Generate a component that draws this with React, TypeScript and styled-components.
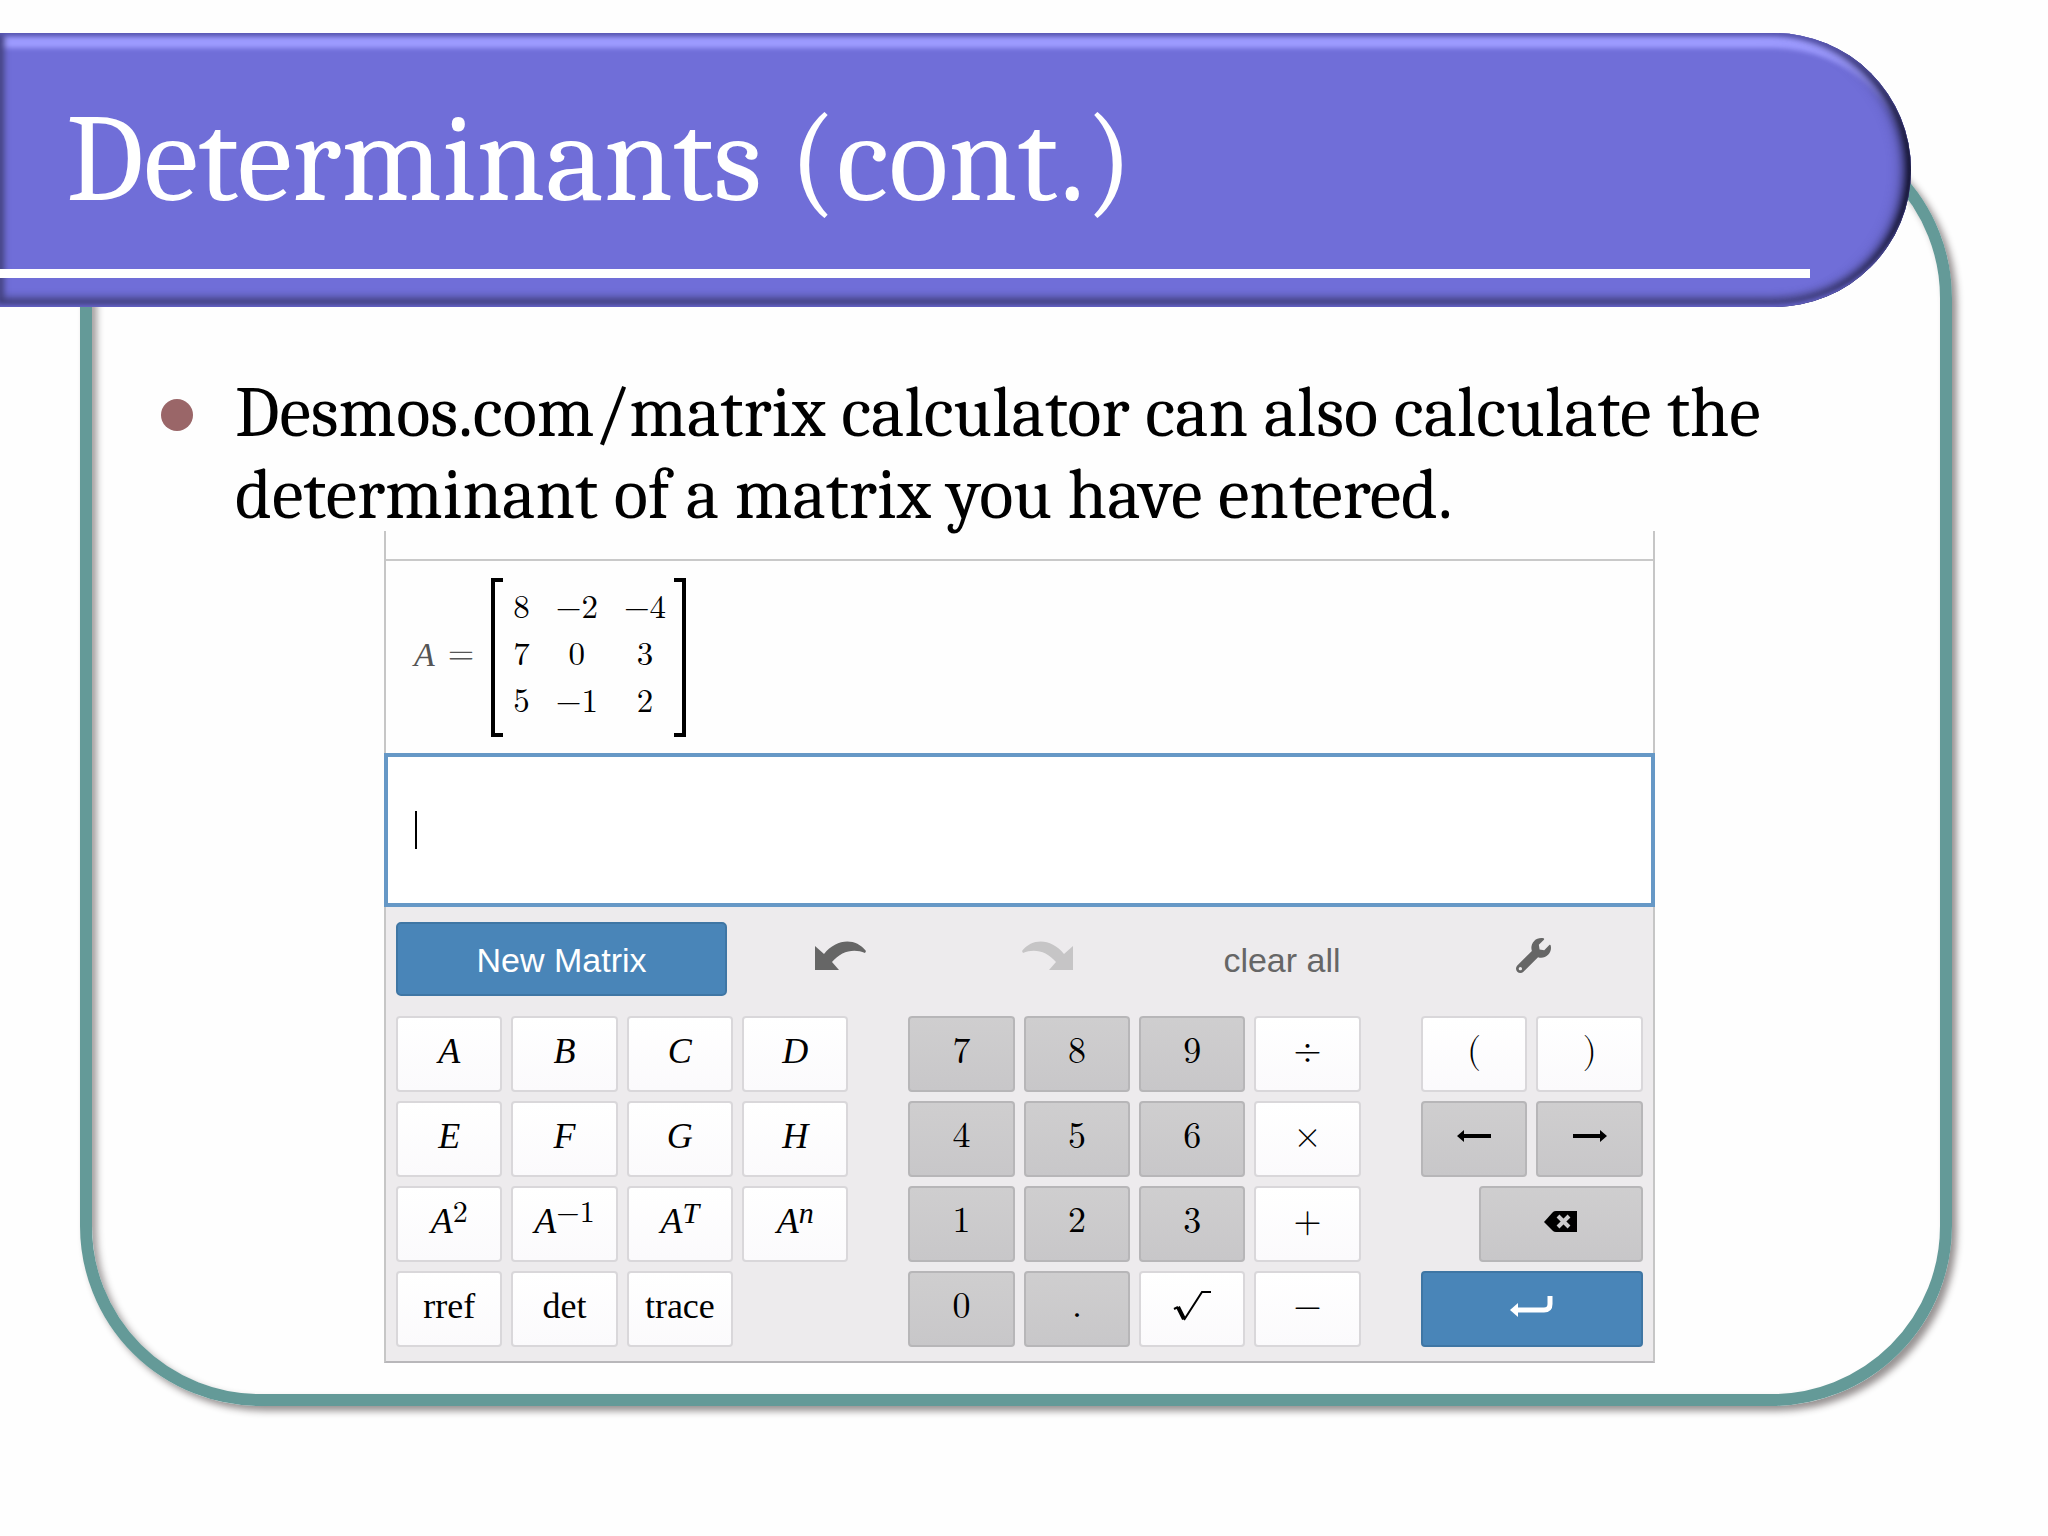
import React from "react";
import styled, { createGlobalStyle, css } from "styled-components";
import { FaWrench } from "react-icons/fa";

const slideFont = `Cambria, Caladea, "Liberation Serif", serif`;
const mathFont = `"Latin Modern Math", "Liberation Serif", serif`;
const textFont = `"Liberation Serif", serif`;
const uiFont = `"Liberation Sans", Arial, sans-serif`;

const GlobalStyle = createGlobalStyle`
  *, *::before, *::after { box-sizing: border-box; }
  body { margin: 0; background: #fefefe; }
  h1, p, ul { margin: 0; padding: 0; }
  button, input { font: inherit; margin: 0; }
`;

const Slide = styled.main`
  padding: 33px 0 129px;
  font-family: ${slideFont};
  color: #000;
`;

const Banner = styled.header`
  position: relative;
  z-index: 1;
  margin-right: 137px;
  padding: 59px 101px 29px 0;
  border-radius: 0 137px 137px 0;
  background: #706ed8;
  box-shadow:
    inset 0 6px 5px -3px #5856b4,
    inset 0 -6px 4px -3px #6664c8,
    inset -9px 0 8px -5px #0a0a1c,
    inset -14px 0 14px -6px #3c3b78,
    inset 8px 0 6px -4px #43427e,
    inset 0 -14px 8px -5px #3f3e78,
    inset 0 18px 5px -3px #9e9cff;
`;

const Title = styled.h1`
  padding-left: 66px;
  font-size: 124px;
  font-weight: 400;
  line-height: 136px;
  padding-bottom: 41px;
  border-bottom: 9px solid #fff;
  color: #fff;
`;

const Frame = styled.section`
  margin: -189px 96px 0 80px;
  padding: 242px 285px 31px 292px;
  border: 12px solid #649a98;
  border-radius: 180px;
  box-shadow:
    5px 5px 7px rgba(40, 30, 30, 0.48),
    inset 5px 5px 7px rgba(40, 30, 30, 0.42);
`;

const Points = styled.ul`
  margin: 0 -150px -5px -223px;
  list-style: none;
`;

const Point = styled.li`
  display: grid;
  grid-template-columns: 32px 1fr;
  gap: 42px;
  font-size: 71px;
  line-height: 82px;

  &::before {
    content: "";
    height: 32px;
    margin-top: 27px;
    border-radius: 50%;
    background: #9a6668;
  }
`;

const Calculator = styled.section`
  border: 2px solid #c6c6c6;
  border-top: 0;
  border-bottom-color: #b8b7ba;
`;

const Expression = styled.div`
  display: flex;
  align-items: center;
  height: 194px;
  margin-top: -2px;
  padding: 0 28px;
  border-top: 2px solid #c9c9c9;
`;

const HistoryTail = styled.div`
  height: 30px;
`;

const Assign = styled.span`
  display: flex;
  gap: 13px;
  margin-right: 17px;
  padding-bottom: 6px;
  font: 34px/41px ${mathFont};
  color: #555;
`;

const Variable = styled.i`
  font-family: ${textFont};
  font-style: italic;
`;

const Matrix = styled.table`
  position: relative;
  border-collapse: collapse;
  font: 33px/41px ${mathFont};

  &::before,
  &::after {
    content: "";
    position: absolute;
    top: -9px;
    bottom: -9px;
    width: 12px;
    border: 4px solid #000;
  }
  &::before { left: 0; border-right: 0; }
  &::after { right: 0; border-left: 0; }
`;

const Cell = styled.td`
  padding: 0 13px 6px;
  text-align: center;

  &:first-child { padding-left: 22px; }
  &:last-child { padding-right: 20px; }
`;

const Entry = styled.label`
  display: flex;
  align-items: center;
  height: 154px;
  margin: 0 -2px;
  padding: 0 27px;
  border: 4px solid #6698c6;
  background: #fff;
`;

const Caret = styled.span`
  width: 2px;
  height: 38px;
  background: #000;
`;

const EntryInput = styled.input`
  flex: 1;
  min-width: 0;
  border: 0;
  outline: 0;
  padding: 0;
  background: transparent;
  font: 34px/48px ${mathFont};
`;

const Keypad = styled.div`
  display: grid;
  gap: 20px;
  padding: 15px 10px 14px;
  background: #edebed;
`;

const Toolbar = styled.div`
  display: grid;
  grid-template-columns: 331fr 226fr 188fr 282fr 220fr;
  height: 74px;
`;

const ToolButton = styled.button<{ $look?: "primary" | "label" }>`
  display: flex;
  align-items: center;
  justify-content: center;
  padding: ${(p) => (p.$look ? "2px 0 0" : "0 0 7px")};
  border: 0;
  border-radius: 5px;
  background: none;
  color: #666;
  font: 34px/40px ${uiFont};

  ${(p) => p.$look === "primary" && css`
    border: 2px solid #3f76a4;
    background: #4985b8;
    color: #fff;
  `}
`;

const Blocks = styled.div`
  display: grid;
  grid-template-columns: 452fr 452fr 222fr;
  gap: 60px;
`;

const Block = styled.div<{ $columns: number }>`
  display: grid;
  grid-template-columns: repeat(${(p) => p.$columns}, 1fr);
  grid-auto-rows: 76px;
  gap: 9px;
`;

type Tone = "light" | "dark" | "blue";

const tones = {
  light: css`border-color: #d9d7da; background: linear-gradient(#fff, #fbfafc); color: #000;`,
  dark: css`border-color: #b7b6b8; background: linear-gradient(#cfcecf, #c8c7c9); color: #000;`,
  blue: css`border-color: #3f76a4; background: #4985b8; color: #fff;`,
};

const Key = styled.button<{ $tone: Tone; $face?: "math" | "italic" | "text"; $span?: number }>`
  display: flex;
  align-items: center;
  justify-content: center;
  grid-column: auto / span ${(p) => p.$span ?? 1};
  padding: 0 0 6px;
  border: 2px solid;
  border-radius: 4px;
  font: ${(p) => (p.$face === "italic" ? "italic " : "")}36px/40px
    ${(p) => (p.$face === "italic" || p.$face === "text" ? textFont : mathFont)};
  ${(p) => tones[p.$tone]}
`;

const BackspaceKey = styled(Key)`
  grid-column: 2 / span 3;
`;

const Power = styled.sup<{ $upright?: boolean }>`
  align-self: flex-start;
  margin-top: 9px;
  font-size: 30px;
  line-height: 32px;
  ${(p) => p.$upright && css`font-family: ${mathFont}; font-style: normal;`}
`;

const Icon = styled.svg`
  display: block;
  overflow: visible;
`;

const UndoArrow = ({ flip }: { flip?: boolean }) => (
  <Icon width="51" height="28" viewBox="0 0 51 28" fill={flip ? "#c6c5c6" : "#666"}>
    <path
      transform={flip ? "translate(51 0) scale(-1 1)" : undefined}
      d="M0 4 L9 12 C21 -3 40 -5 51 9 L50 11 C39 6 26 9 17 20 L24 28 H0Z"
    />
  </Icon>
);

const MoveArrow = ({ right }: { right?: boolean }) => (
  <Icon width="34" height="12" viewBox="0 0 34 12">
    <path
      transform={right ? "translate(34 0) scale(-1 1)" : undefined}
      d="M0 6 L7 0 V4 H34 V8 H7 V12Z"
    />
  </Icon>
);

const EraseIcon = () => (
  <Icon width="33" height="21" viewBox="0 0 33 21">
    <path d="M0 11 L9 1 Q10 0 12 0 H33 V21 H12 Q10 21 9 20Z" />
    <path d="M14 5 L25 16 M25 5 L14 16" stroke="#cccbcd" strokeWidth="4" />
  </Icon>
);

const EnterIcon = () => (
  <Icon width="43" height="20" viewBox="0 0 43 20">
    <path d="M6 14 H34 Q40 14 40 8 V0" fill="none" stroke="#fff" strokeWidth="5" />
    <path d="M0 14 L8 7 V21Z" fill="#fff" />
  </Icon>
);

const RootIcon = () => (
  <Icon width="37" height="30" viewBox="0 0 37 30" fill="none" stroke="#000">
    <path d="M0 18 L4 16" strokeWidth="2" />
    <path d="M4 16 L10 28" strokeWidth="4" />
    <path d="M10 29 L28 1 H37" strokeWidth="2" />
  </Icon>
);

const matrixRows = [
  ["8", "−2", "−4"],
  ["7", "0", "3"],
  ["5", "−1", "2"],
];
const letters = ["A", "B", "C", "D", "E", "F", "G", "H"];
const powers = [
  { exponent: "2", upright: true },
  { exponent: "−1", upright: true },
  { exponent: "T" },
  { exponent: "n" },
];
const functions = ["rref", "det", "trace"];
const numberKeys = ["7", "8", "9", "÷", "4", "5", "6", "×", "1", "2", "3", "+", "0", ".", "√", "−"];

export default function App() {
  return (
    <>
      <GlobalStyle />
      <Slide>
        <Banner>
          <Title>Determinants (cont.)</Title>
        </Banner>
        <Frame>
          <Points>
            <Point>
              <p>Desmos.com/matrix calculator can also calculate the determinant of a matrix you have entered.</p>
            </Point>
          </Points>
          <Calculator>
            <HistoryTail />
            <Expression>
              <Assign>
                <Variable>A</Variable>
                <span>=</span>
              </Assign>
              <Matrix>
                <tbody>
                  {matrixRows.map((row) => (
                    <tr key={row.join()}>
                      {row.map((value) => <Cell key={value}>{value}</Cell>)}
                    </tr>
                  ))}
                </tbody>
              </Matrix>
            </Expression>
            <Entry>
              <Caret />
              <EntryInput aria-label="Expression" />
            </Entry>
            <Keypad>
              <Toolbar>
                <ToolButton $look="primary">New Matrix</ToolButton>
                <ToolButton aria-label="Undo"><UndoArrow /></ToolButton>
                <ToolButton aria-label="Redo"><UndoArrow flip /></ToolButton>
                <ToolButton $look="label">clear all</ToolButton>
                <ToolButton aria-label="Settings"><FaWrench size={35} /></ToolButton>
              </Toolbar>
              <Blocks>
                <Block $columns={4}>
                  {letters.map((name) => <Key key={name} $tone="light" $face="italic">{name}</Key>)}
                  {powers.map(({ exponent, upright }) => (
                    <Key key={exponent} $tone="light" $face="italic">
                      A<Power $upright={upright}>{exponent}</Power>
                    </Key>
                  ))}
                  {functions.map((name) => <Key key={name} $tone="light" $face="text">{name}</Key>)}
                </Block>
                <Block $columns={4}>
                  {numberKeys.map((name) =>
                    name === "√" ? (
                      <Key key={name} $tone="light" aria-label="Square root"><RootIcon /></Key>
                    ) : (
                      <Key key={name} $tone={/[\d.]/.test(name) ? "dark" : "light"}>{name}</Key>
                    )
                  )}
                </Block>
                <Block $columns={4}>
                  <Key $tone="light" $span={2}>(</Key>
                  <Key $tone="light" $span={2}>)</Key>
                  <Key $tone="dark" $span={2} aria-label="Move left"><MoveArrow /></Key>
                  <Key $tone="dark" $span={2} aria-label="Move right"><MoveArrow right /></Key>
                  <BackspaceKey $tone="dark" aria-label="Backspace"><EraseIcon /></BackspaceKey>
                  <Key $tone="blue" $span={4} aria-label="Enter"><EnterIcon /></Key>
                </Block>
              </Blocks>
            </Keypad>
          </Calculator>
        </Frame>
      </Slide>
    </>
  );
}
